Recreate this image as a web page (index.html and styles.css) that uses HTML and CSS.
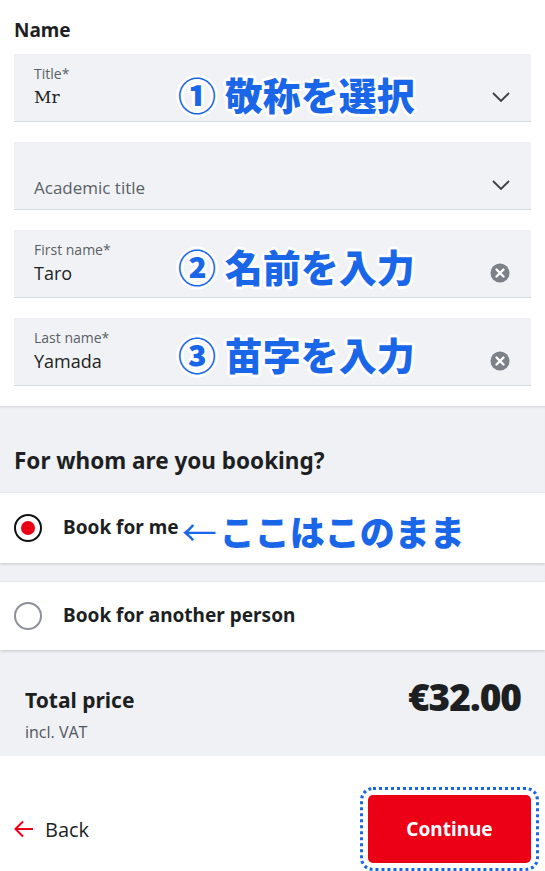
FILE: index.html
```html
<!DOCTYPE html>
<html lang="en">
<head>
    <meta charset="UTF-8">
    <meta name="viewport" content="width=device-width, initial-scale=1.0">
    <title>Passenger details</title>
    <link rel="stylesheet" href="styles.css">
</head>
<body>
    <!-- Name fields -->
    <section class="name-section">
        <h2 class="section-title">Name</h2>
        <div class="fields">
            <div class="field">
                <div class="field-text">
                    <span class="field-label">Title*</span>
                    <span class="field-value serif">Mr</span>
                </div>
                <svg class="chevron" width="20" height="12" viewBox="0 0 20 12"><path d="M2 2 L10 10 L18 2" fill="none" stroke="#3c3f44" stroke-width="1.8"/></svg>
                <div class="note note-first">① 敬称を選択</div>
            </div>
            <div class="field">
                <div class="field-text">
                    <span class="field-placeholder">Academic title</span>
                </div>
                <svg class="chevron" width="20" height="12" viewBox="0 0 20 12"><path d="M2 2 L10 10 L18 2" fill="none" stroke="#3c3f44" stroke-width="1.8"/></svg>
            </div>
            <div class="field">
                <div class="field-text">
                    <span class="field-label">First name*</span>
                    <span class="field-value">Taro</span>
                </div>
                <svg class="clear" width="20" height="20" viewBox="0 0 20 20"><circle cx="10" cy="10" r="9.5" fill="#7c8089"/><path d="M6.5 6.5 L13.5 13.5 M13.5 6.5 L6.5 13.5" stroke="#fff" stroke-width="2.4" stroke-linecap="round"/></svg>
                <div class="note">② 名前を入力</div>
            </div>
            <div class="field">
                <div class="field-text">
                    <span class="field-label">Last name*</span>
                    <span class="field-value">Yamada</span>
                </div>
                <svg class="clear" width="20" height="20" viewBox="0 0 20 20"><circle cx="10" cy="10" r="9.5" fill="#7c8089"/><path d="M6.5 6.5 L13.5 13.5 M13.5 6.5 L6.5 13.5" stroke="#fff" stroke-width="2.4" stroke-linecap="round"/></svg>
                <div class="note">③ 苗字を入力</div>
            </div>
        </div>
    </section>

    <!-- Booking for -->
    <section class="booking-section">
        <h2 class="booking-title">For whom are you booking?</h2>
        <div class="choice selected">
            <span class="radio"><span class="radio-dot"></span></span>
            <span class="choice-label">Book for me</span>
            <span class="note-inline"><span class="note-arrow">←</span>ここはこのまま</span>
        </div>
        <div class="choice">
            <span class="radio"></span>
            <span class="choice-label">Book for another person</span>
        </div>
        <div class="total">
            <div>
                <div class="total-label">Total price</div>
                <div class="total-vat">incl. VAT</div>
            </div>
            <div class="total-amount">€32.00</div>
        </div>
    </section>

    <!-- Footer actions -->
    <footer class="actions">
        <a class="back" href="#">
            <svg width="20" height="18" viewBox="0 0 20 18"><path d="M19 9 H2 M9 1.5 L1.5 9 L9 16.5" fill="none" stroke="#ec0016" stroke-width="2"/></svg>
            Back
        </a>
        <button class="continue">Continue</button>
    </footer>
</body>
</html>
```

FILE: styles.css
```css
body {
    margin: 0;
    font-family: "Open Sans", "Noto Sans CJK JP", sans-serif;
    color: #1d1f23;
    background: #fff;
}

.name-section {
    padding: 18px 14px 20px;
    background: #fff;
}

.section-title {
    margin: 0 0 12px;
    font-family: "Noto Sans", sans-serif;
    font-size: 19px;
    line-height: 24px;
    font-weight: 700;
}

.fields {
    display: flex;
    flex-direction: column;
    gap: 20px;
}

.field {
    position: relative;
    display: flex;
    align-items: center;
    height: 67px;
    padding: 0 20px;
    background: #f0f2f5;
    border-bottom: 1px solid #d4d8dd;
}

.field-text {
    flex: 1;
    display: flex;
    flex-direction: column;
}

.field-label {
    font-size: 14px;
    line-height: 17px;
    color: #5b5f66;
    margin-top: -1px;
}

.field-value {
    font-size: 18px;
    line-height: 26px;
    margin-top: 2px;
    color: #1d1f23;
}

.serif {
    font-family: "DejaVu Serif", serif;
    font-size: 17px;
}

.field-placeholder {
    font-size: 17px;
    color: #5b5f66;
    margin-top: 24px;
}

.chevron {
    margin-top: 19px;
}

.clear {
    margin-right: 1px;
    margin-top: 18px;
}

.note {
    position: absolute;
    left: 164px;
    top: 11px;
    font-family: "Noto Sans CJK JP", sans-serif;
    font-size: 38px;
    font-weight: 900;
    line-height: 50px;
    color: #1a66e8;
    text-shadow: 2px 0 #fff, -2px 0 #fff, 0 2px #fff, 0 -2px #fff,
        2px 2px #fff, -2px -2px #fff, 2px -2px #fff, -2px 2px #fff,
        3px 0 #fff, -3px 0 #fff, 0 3px #fff, 0 -3px #fff;
    white-space: nowrap;
}

.note-first {
    top: 15px;
}

.booking-section {
    background: #f0f1f4;
    padding-top: 41px;
    box-shadow: inset 0 3px 3px -2px rgba(0, 0, 0, 0.12);
}

.booking-title {
    margin: 0 0 18px 14px;
    font-family: "Noto Sans", sans-serif;
    font-size: 22.5px;
    line-height: 28px;
    font-weight: 700;
}

.choice {
    display: flex;
    align-items: center;
    gap: 21px;
    height: 68px;
    padding-left: 14px;
    background: #fff;
    box-shadow: 0 1px 3px rgba(0, 0, 0, 0.18);
}

.choice.selected {
    height: 70px;
    margin-bottom: 19px;
}

.radio {
    display: flex;
    align-items: center;
    justify-content: center;
    width: 24px;
    height: 24px;
    border: 2px solid #8c9098;
    border-radius: 50%;
}

.selected .radio {
    border-color: #111;
}

.radio-dot {
    width: 14px;
    height: 14px;
    border-radius: 50%;
    background: #ec0016;
}

.choice-label {
    font-family: "Noto Sans", sans-serif;
    font-size: 19px;
    font-weight: 700;
    margin-top: -2px;
}

.note-inline {
    margin-left: -18px;
    font-family: "Noto Sans CJK JP", sans-serif;
    font-size: 35px;
    font-weight: 900;
    color: #1a66e8;
    white-space: nowrap;
    margin-top: 4px;
}

.note-arrow {
    font-weight: 400;
    margin-right: 3px;
}

.total {
    display: flex;
    justify-content: space-between;
    padding: 35px 24px 9px 25px;
}

.total-label {
    font-family: "Noto Sans", sans-serif;
    font-size: 21px;
    font-weight: 700;
    line-height: 30px;
}

.total-vat {
    font-size: 16px;
    line-height: 30px;
    color: #50545b;
    margin-top: 2px;
}

.total-amount {
    font-family: "Noto Sans", sans-serif;
    font-size: 37px;
    font-weight: 900;
    letter-spacing: -1px;
    line-height: 34px;
    margin-top: -5px;
}

.actions {
    display: flex;
    justify-content: space-between;
    align-items: center;
    padding: 39px 14px 9px;
}

.back {
    display: flex;
    align-items: center;
    gap: 11px;
    font-size: 20px;
    color: #1d1f23;
    text-decoration: none;
}

.continue {
    width: 163px;
    height: 68px;
    border: none;
    border-radius: 5px;
    background: #ec0016;
    color: #fff;
    font-family: "Noto Sans", sans-serif;
    font-size: 19px;
    font-weight: 700;
    outline: 3px dotted #1a66e8;
    outline-offset: 5px;
}
```
